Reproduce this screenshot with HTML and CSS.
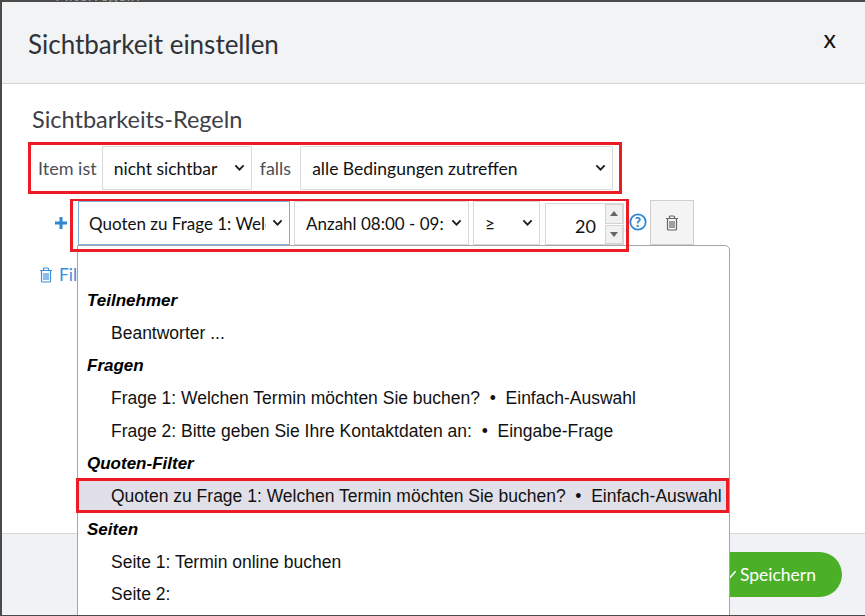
FILE: index.html
```html
<!DOCTYPE html>
<html lang="de">
<head>
<meta charset="utf-8">
<title>Sichtbarkeit einstellen</title>
<link rel="stylesheet" href="styles.css">
</head>
<body>
<div class="backdrop-text">Filterregeln</div>
<main class="modal">
  <header class="modal-header">
    <h1>Sichtbarkeit einstellen</h1>
    <span class="close">x</span>
  </header>
  <section class="modal-body">
    <h2>Sichtbarkeits-Regeln</h2>
    <div class="frame frame-one">
      <span class="label">Item ist</span>
      <div class="select s-visible"><span class="val">nicht sichtbar</span><svg class="chev" viewBox="0 0 12 8"><path d="M1.500 1.500 6 6l4.500-4.500"/></svg></div>
      <span class="label falls">falls</span>
      <div class="select s-match"><span class="val">alle Bedingungen zutreffen</span><svg class="chev" viewBox="0 0 12 8"><path d="M1.500 1.500 6 6l4.500-4.500"/></svg></div>
    </div>
    <div class="rule-row">
      <svg class="plus" viewBox="0 0 12 12"><path d="M4.500 0h3v4.500H12v3H7.500V12h-3V7.500H0v-3h4.500z"/></svg>
      <div class="frame frame-two">
        <div class="select s-source focus"><span class="val">Quoten zu Frage 1: Welchen Termin</span><svg class="chev" viewBox="0 0 12 8"><path d="M1.500 1.500 6 6l4.500-4.500"/></svg></div>
        <div class="select s-count"><span class="val">Anzahl 08:00 - 09:00</span><svg class="chev" viewBox="0 0 12 8"><path d="M1.500 1.500 6 6l4.500-4.500"/></svg></div>
        <div class="select s-op"><span class="val">≥</span><svg class="chev" viewBox="0 0 12 8"><path d="M1.500 1.500 6 6l4.500-4.500"/></svg></div>
        <div class="number">
          <span class="num">20</span>
          <div class="spin">
            <span class="spin-btn"><i class="up"></i></span>
            <span class="spin-btn"><i class="down"></i></span>
          </div>
        </div>
      </div>
      <svg class="help" viewBox="0 0 18 18"><circle cx="9" cy="9" r="7.700"/><text x="9" y="13.600" text-anchor="middle">?</text></svg>
      <button class="trash-btn" type="button">
        <svg viewBox="0 0 14 16"><path d="M1 3.500h12M4.500 3.500V2q0-1 1-1h3q1 0 1 1v1.500M2.500 3.500v10.500q0 1 1 1h7q1 0 1-1V3.500M5 6v7M7 6v7M9 6v7"/></svg>
      </button>
    </div>
    <a class="filter-link">
      <svg viewBox="0 0 14 16"><path d="M1 3.500h12M4.500 3.500V2q0-1 1-1h3q1 0 1 1v1.500M2.500 3.500v10.500q0 1 1 1h7q1 0 1-1V3.500M5 6v7M7 6v7M9 6v7"/></svg>
      <span>Filter</span>
    </a>
  </section>
  <footer class="modal-footer">
    <button class="save" type="button">
      <svg viewBox="0 0 14 12"><path d="M1.500 6.500 5 10l7.500-8.500"/></svg>
      <span>Speichern</span>
    </button>
  </footer>
  <div class="dropdown">
    <div class="group first">Teilnehmer</div>
    <div class="item">Beantworter ...</div>
    <div class="group">Fragen</div>
    <div class="item">Frage 1: Welchen Termin möchten Sie buchen? &nbsp;•&nbsp; Einfach-Auswahl</div>
    <div class="item">Frage 2: Bitte geben Sie Ihre Kontaktdaten an: &nbsp;•&nbsp; Eingabe-Frage</div>
    <div class="group">Quoten-Filter</div>
    <div class="item selected">Quoten zu Frage 1: Welchen Termin möchten Sie buchen? &nbsp;•&nbsp; Einfach-Auswahl</div>
    <div class="group">Seiten</div>
    <div class="item">Seite 1: Termin online buchen</div>
    <div class="item">Seite 2:</div>
  </div>
</main>
</body>
</html>
```
FILE: styles.css
```css
* { box-sizing: border-box; }
html, body { margin: 0; height: 100%; }
body {
  position: relative;
  height: 616px;
  overflow: hidden;
  background: #4a4a4a;
  padding: 2px 0 0 2px;
  font-family: Lato, sans-serif;
  color: #2b2b2b;
}
.backdrop-text {
  position: absolute;
  left: 55px;
  top: -13px;
  font-size: 17px;
  line-height: 16px;
  color: #999;
}
.modal {
  position: relative;
  height: 613px;
  background: #fff;
  display: flex;
  flex-direction: column;
  overflow: hidden;
}
.modal-header {
  height: 82px;
  flex: none;
  background: #f2f3f5;
  border-bottom: 1px solid #d6d6d6;
  display: flex;
  justify-content: space-between;
  padding: 25px 29px 0 26px;
}
h1 {
  margin: 0;
  font-size: 26px;
  line-height: 34px;
  font-weight: 400;
  color: #2f3237;
}
.close {
  font-size: 25px;
  line-height: 23px;
  color: #111;
}
.modal-body {
  flex: 1;
  padding: 20px 0 0 26px;
}
h2 {
  margin: 0 0 8px 4px;
  font-size: 23.500px;
  line-height: 30px;
  font-weight: 400;
  color: #3d4046;
}
.frame {
  border: 3px solid #ed1c24;
  display: flex;
  align-items: flex-start;
}
.frame-one {
  width: 594px;
  height: 52px;
  padding: 0 5px;
  align-items: center;
}
.label {
  font-size: 18px;
  color: #4b4f55;
  margin: 0 5px 0 2px;
}
.label.falls { margin: 0 9px 0 8px; }
.select {
  height: 44px;
  background: #fff;
  border: 1px solid #d9d9d9;
  display: flex;
  align-items: center;
  font-size: 17.500px;
  color: #111;
  padding: 0 6px 0 11px;
  flex: none;
}
.val { flex: 1; overflow: hidden; white-space: nowrap; }
.chev { width: 11px; height: 7.500px; flex: none; margin-left: 6px; }
.chev path { fill: none; stroke: #1c1c1c; stroke-width: 2; }
.s-visible { width: 150px; }
.s-match { width: 313px; }
.rule-row {
  display: flex;
  align-items: flex-start;
  margin: 5px 0 0 0;
  position: relative;
}
.plus { width: 12px; height: 12px; fill: #2f86d3; margin: 18px 3px 0 27px; flex: none; }
.frame-two {
  position: relative;
  z-index: 3;
  width: 559px;
  height: 53px;
  border-top-width: 2px;
  padding: 0 0 0 5px;
  gap: 4px;
  flex: none;
}
.s-source { width: 212px; border-color: #7fb0dc; padding-left: 10px; font-size: 17px; }
.s-count { width: 175px; font-size: 17px; }
.s-count .chev { margin-left: 7px; }
.s-op { width: 67px; }
.number {
  width: 79px;
  height: 42px;
  margin: 2px 0 0 1px;
  border: 1px solid #d9d9d9;
  display: flex;
  justify-content: flex-end;
}
.num { font-size: 18px; line-height: 44px; color: #111; margin-right: 9px; }
.spin { width: 18px; display: flex; flex-direction: column; gap: 1px; }
.spin-btn {
  flex: 1;
  background: #f1f1f1;
  border: 1px solid #d4d4d4;
  display: flex;
  align-items: center;
  justify-content: center;
}
.spin-btn i { width: 0; height: 0; border-left: 4px solid transparent; border-right: 4px solid transparent; }
.spin-btn .up { border-bottom: 5px solid #666; }
.spin-btn .down { border-top: 5px solid #666; }
.help { width: 18px; height: 18px; flex: none; margin: 14px 0 0 0; }
.help circle { fill: #fff; stroke: #2f86d3; stroke-width: 1.800; }
.help text { font-family: Lato, sans-serif; font-size: 13.500px; font-weight: 900; fill: #2f86d3; }
.trash-btn {
  width: 44px;
  height: 45px;
  flex: none;
  margin: 1px 0 0 3px;
  padding: 0;
  background: #f4f4f4;
  border: 1px solid #cfcfcf;
  display: flex;
  align-items: center;
  justify-content: center;
}
.trash-btn svg { width: 14px; height: 16px; }
.trash-btn path { fill: none; stroke: #666; stroke-width: 1.200; }
.filter-link {
  display: flex;
  align-items: center;
  gap: 6px;
  margin: 12px 0 0 11px;
  font-size: 17.500px;
  color: #3a8fdc;
}
.filter-link svg { width: 14px; height: 16px; }
.filter-link path { fill: none; stroke: #3a8fdc; stroke-width: 1.200; }
.modal-footer {
  flex: none;
  height: 82px;
  background: #f1f2f5;
  border-top: 1px solid #d6d6d6;
  display: flex;
  justify-content: flex-end;
  padding: 18px 23px 0 0;
}
.save {
  width: 150px;
  height: 45px;
  border: 0;
  border-radius: 23px;
  background: #4bb028;
  color: #fff;
  font: 17.500px Lato, sans-serif;
  display: flex;
  align-items: center;
  justify-content: flex-end;
  gap: 3px;
  padding: 0 26px 0 0;
}
.save svg { width: 12px; height: 10px; }
.save path { fill: none; stroke: #fff; stroke-width: 2; }
.dropdown {
  position: absolute;
  left: 75px;
  top: 243px;
  width: 653px;
  height: 372px;
  background: #fff;
  border: 1px solid #a6a6a6;
  border-radius: 0 5px 0 0;
  font-family: "Liberation Sans", Arial, sans-serif;
  font-size: 17.500px;
  color: #111;
  padding-top: 39px;
}
.group, .item {
  height: 32.700px;
  line-height: 31px;
  white-space: nowrap;
}
.group { font-weight: 700; font-style: italic; color: #000; font-size: 17px; line-height: 32.700px; padding-left: 9px; }
.item { padding-left: 33px; }
.item.selected {
  height: 35px;
  line-height: 30px;
  margin: -3px 0 0.700px -2px;
  padding-left: 32px;
  background: #e1e0e8;
  border: 3px solid #ed1c24;
}
```
